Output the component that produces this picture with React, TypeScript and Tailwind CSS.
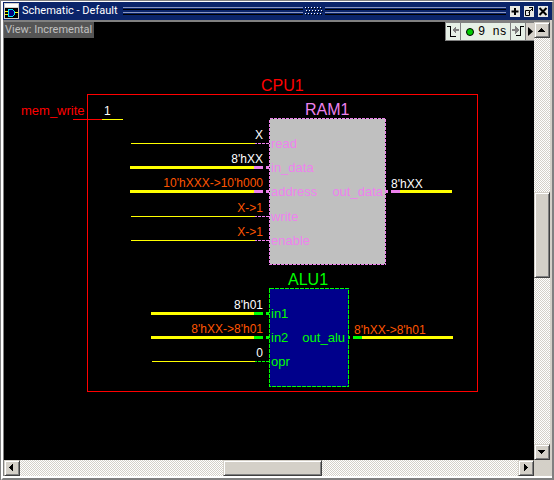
import type { ReactNode } from "react";

const YELLOW = "#ffff00";
const VIOLET = "#ee82ee";
const GREEN = "#00ff00";
const WHITE = "#ffffff";
const ORANGE = "#ff5500";
const RED = "#ff0000";

type Port = {
  y: number;
  name: string;
  value: string;
  color: string;
  start: number;
  bus?: boolean;
};

const ramInputs: Port[] = [
  { y: 121, name: "read", value: "X", color: WHITE, start: 127 },
  { y: 145, name: "in_data", value: "8'hXX", color: WHITE, start: 126, bus: true },
  { y: 169, name: "address", value: "10'hXXX->10'h000", color: ORANGE, start: 126, bus: true },
  { y: 194, name: "write", value: "X->1", color: ORANGE, start: 127 },
  { y: 218, name: "enable", value: "X->1", color: ORANGE, start: 127 },
];

const aluInputs: Port[] = [
  { y: 291, name: "in1", value: "8'h01", color: WHITE, start: 147, bus: true },
  { y: 315, name: "in2", value: "8'hXX->8'h01", color: ORANGE, start: 147, bus: true },
  { y: 339, name: "opr", value: "0", color: WHITE, start: 148 },
];

function InputPort({ port, accent }: { port: Port; accent: string }) {
  const { y, start } = port;
  return (
    <g>
      {port.bus ? (
        <>
          <rect x={start} y={y - 1} width={250 - start} height={3} fill={YELLOW} />
          <rect x={250} y={y - 1} width={9} height={3} fill={accent} />
          <rect x={262} y={y - 1} width={3} height={3} fill={accent} />
        </>
      ) : (
        <>
          <rect x={start} y={y} width={251 - start} height={1} fill={YELLOW} />
          {[251, 254, 258, 262].map((x) => (
            <rect key={x} x={x} y={y} width={x === 251 ? 2 : 3} height={1} fill={accent} />
          ))}
        </>
      )}
      <text x={259} y={y - 4} textAnchor="end" fill={port.color} className="text-[12px]">
        {port.value}
      </text>
      <text x={267} y={y + 5} fill={accent} className="text-[13px]">
        {port.name}
      </text>
    </g>
  );
}

function Schematic() {
  return (
    <svg
      className="block h-full w-full font-['Liberation_Sans',Arial,sans-serif]"
      shapeRendering="crispEdges"
      role="img"
      aria-label="CPU1 schematic"
    >
      <rect x={83.5} y={72.5} width={390} height={297} fill="none" stroke={RED} />
      <text x={257} y={69} fill={RED} className="text-[16px]">CPU1</text>

      <text x={17} y={93} fill={RED} className="text-[13px]">mem_write</text>
      <rect x={69} y={97} width={29} height={1} fill={RED} />
      <rect x={98} y={97} width={21} height={1} fill={YELLOW} />
      <text x={100} y={93} fill={WHITE} className="text-[12px]">1</text>

      <rect x={265.5} y={96.5} width={116} height={146} fill="#c0c0c0" stroke="#000000" />
      <rect x={265.5} y={96.5} width={116} height={146} fill="none" stroke={VIOLET} strokeDasharray="3 1" />
      <text x={301} y={93} fill={VIOLET} className="text-[16px]">RAM1</text>
      {ramInputs.map((port) => (
        <InputPort key={port.name} port={port} accent={VIOLET} />
      ))}
      <text x={379} y={174} textAnchor="end" fill={VIOLET} className="text-[13px]">out_data</text>
      <rect x={381} y={168} width={3} height={3} fill={VIOLET} />
      <rect x={387} y={168} width={9} height={3} fill={VIOLET} />
      <rect x={396} y={168} width={52} height={3} fill={YELLOW} />
      <text x={387} y={166} fill={WHITE} className="text-[12px]">8'hXX</text>

      <rect x={265.5} y={266.5} width={79} height={98} fill="#00008b" stroke={GREEN} strokeDasharray="4 1" />
      <text x={284} y={263} fill={GREEN} className="text-[16px]">ALU1</text>
      {aluInputs.map((port) => (
        <InputPort key={port.name} port={port} accent={GREEN} />
      ))}
      <text x={341} y={320} textAnchor="end" fill={GREEN} className="text-[13px]">out_alu</text>
      <rect x={344} y={314} width={2} height={3} fill={GREEN} />
      <rect x={349} y={314} width={9} height={3} fill={GREEN} />
      <rect x={358} y={314} width={91} height={3} fill={YELLOW} />
      <text x={350} y={312} fill={ORANGE} className="text-[12px]">8'hXX-&gt;8'h01</text>
    </svg>
  );
}

function GripLines() {
  return (
    <div className="flex flex-1 flex-col gap-[2px]">
      <div className="h-[3px] border-t border-b border-t-[#8a96c0] border-b-black" />
      <div className="h-[3px] border-t border-b border-t-[#8a96c0] border-b-black" />
    </div>
  );
}

function GripDots() {
  return (
    <svg className="h-2 w-[18px] shrink-0" viewBox="0 0 18 8" shapeRendering="crispEdges" aria-hidden="true">
      {[0, 3, 6].map((y, row) =>
        [0, 3, 6, 9, 12, 15].map((x) => (
          <g key={`${x}-${y}`}>
            <rect x={x + (row % 2)} y={y} width={1} height={1} fill="#ffffff" />
            <rect x={x + (row % 2) + 1} y={y + 1} width={1} height={1} fill="#000000" />
          </g>
        )),
      )}
    </svg>
  );
}

function TitleButton({ label, children }: { label: string; children: ReactNode }) {
  return (
    <button type="button" aria-label={label} className="h-[11px] w-[10px] shrink-0 bg-[#e8e8e4]">
      <svg className="block h-[11px] w-[10px]" viewBox="0 0 10 11" fill="none" stroke="#000000" aria-hidden="true">
        {children}
      </svg>
    </button>
  );
}

const raised =
  "shrink-0 border border-t-[#d4d0c8] border-l-[#d4d0c8] border-r-[#404040] border-b-[#404040] bg-[#d4d0c8] shadow-[inset_1px_1px_0_#ffffff,inset_-1px_-1px_0_#808080]";
const track =
  "bg-[repeating-conic-gradient(#ffffff_0_25%,#d4d0c8_0_50%)] bg-[length:2px_2px]";

function ScrollButton({ label, points }: { label: string; points: string }) {
  return (
    <button type="button" aria-label={label} className={`h-4 w-4 ${raised}`}>
      <svg className="block h-[14px] w-[14px]" viewBox="0 0 14 14" shapeRendering="crispEdges" aria-hidden="true">
        <polygon points={points} fill="#000000" />
      </svg>
    </button>
  );
}

export default function App() {
  return (
    <main className="flex h-screen flex-col border-t border-l border-[#808080] bg-[#d4d0c8] font-[Roboto,sans-serif]">
      <div className="flex min-h-0 flex-1 flex-col border-t border-r-2 border-b-2 border-l-2 border-t-white border-r-[#808080] border-b-[#808080] border-l-white">
        <header className="flex h-[18px] shrink-0 items-center bg-[#0a246a] pr-1 pl-px">
          <svg className="mr-[3px] h-4 w-[15px] shrink-0" viewBox="0 0 15 16" shapeRendering="crispEdges" aria-hidden="true">
            <rect width="15" height="16" fill="#d4d0c8" />
            <rect x="1" y="1" width="13" height="3" fill="#ffffff" />
            <rect x="1" y="5" width="13" height="10" fill="#000000" />
            <path d="M1 8.500h3M1 11.500h3M11 9.500h3" stroke="#ffff00" />
            <path d="M4.500 6.500h4l2 2v3l-2 2h-4z" fill="#000080" stroke="#00e5ff" />
          </svg>
          <h1 className="mr-[5px] shrink-0 text-[11px] leading-[18px] text-white">Schematic - Default</h1>
          <GripLines />
          <div className="flex px-[2px]">
            <GripDots />
          </div>
          <GripLines />
          <div className="ml-1 flex shrink-0 gap-1">
            <TitleButton label="Add">
              <path d="M5 2v7M1.500 5.500h7" strokeWidth="2" />
            </TitleButton>
            <TitleButton label="Undock">
              <path d="M1.500 4.500h4v5h-4zM4.500 6.500l4-4M5 1.500h4M8.500 1v4" />
            </TitleButton>
            <TitleButton label="Close">
              <path d="M1.500 2l7 7M8.500 2l-7 7" strokeWidth="2" />
            </TitleButton>
          </div>
        </header>

        <div className="mr-[2px] flex min-h-0 flex-1 flex-col border-t border-l border-[#808080]">
          <div className="flex min-h-0 flex-1 border-t border-[#808080]">
            <section className="relative min-w-0 flex-1 overflow-hidden bg-black">
              <Schematic />
              <div className="absolute top-0 left-0 h-4 bg-[#555555] pr-[2px] pl-px text-[11px] leading-4 text-[#c0c0c0]">
                View: Incremental
              </div>
              <div className="absolute top-0 right-0 flex h-[19px] border border-r-0 border-[#808080] bg-[#e6f0e6]">
                <button type="button" aria-label="Previous change" className="w-[15px] border-r border-[#808080]">
                  <svg className="block h-[17px] w-[14px]" viewBox="0 0 14 17" fill="none" shapeRendering="crispEdges" aria-hidden="true">
                    <path d="M1 3.500h3.500v9.500h5" stroke="#000000" />
                    <path d="M6 7l4-4v3h3v2h-3v3z" fill="#808080" />
                  </svg>
                </button>
                <div className="flex w-[49px] items-center gap-1 pl-[5px] font-['Liberation_Mono',monospace] text-[12px] text-black">
                  <span className="h-2 w-2 rounded-full border border-black bg-[#00cc00]" />
                  <span className="whitespace-pre">9 ns</span>
                </div>
                <button type="button" aria-label="Next change" className="w-[15px] border-l border-[#808080]">
                  <svg className="block h-[17px] w-[14px]" viewBox="0 0 14 17" fill="none" shapeRendering="crispEdges" aria-hidden="true">
                    <path d="M5 12.500h4.500v-9h3.500" stroke="#000000" />
                    <path d="M8 7l-4-4v3h-3v2h3v3z" fill="#808080" />
                  </svg>
                </button>
                <button type="button" aria-label="More" className="w-[9px] border-l border-[#808080] bg-[#d4d0c8]">
                  <svg className="block h-[17px] w-2" viewBox="0 0 8 17" aria-hidden="true">
                    <path d="M2 4l5 4.500l-5 4.500z" fill="#000000" />
                  </svg>
                </button>
              </div>
            </section>
            <div className={`flex w-4 shrink-0 flex-col ${track}`}>
              <ScrollButton label="Scroll up" points="3,9 10,9 7,5 6,5" />
              <div className="grow-154" />
              <div className={`h-[86px] ${raised}`} />
              <div className="grow-166" />
              <ScrollButton label="Scroll down" points="3,5 10,5 7,9 6,9" />
            </div>
          </div>
          <div className="flex h-4 shrink-0 bg-[#d4d0c8]">
            <div className={`flex flex-1 ${track}`}>
              <ScrollButton label="Scroll left" points="8,3 8,10 4,7 4,6" />
              <div className="grow-203" />
              <div className={`w-[99px] ${raised}`} />
              <div className="grow-196" />
              <ScrollButton label="Scroll right" points="5,3 5,10 9,7 9,6" />
            </div>
            <div className="w-4 shrink-0" />
          </div>
        </div>
        <div className="h-[2px] shrink-0 bg-white" />
      </div>
    </main>
  );
}
